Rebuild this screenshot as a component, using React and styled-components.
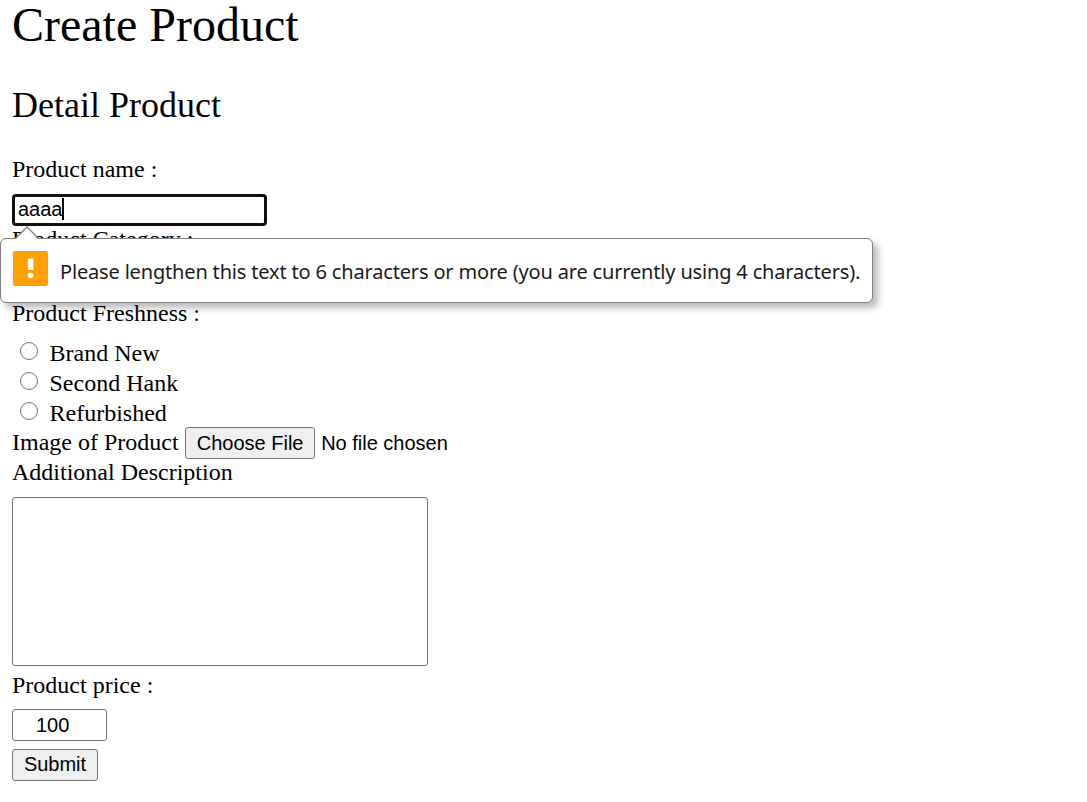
import React from "react";
import styled, { createGlobalStyle } from "styled-components";

const GlobalStyle = createGlobalStyle`
  * { box-sizing: border-box; }
  body {
    margin: 0;
    background: #fff;
    color: #000;
    font-family: "Liberation Serif", "Times New Roman", serif;
    font-size: 24px;
    line-height: 24px;
  }
`;

const Page = styled.main`
  display: flex;
  flex-direction: column;
  align-items: flex-start;
  padding: 0 12px;
`;

const Title = styled.h1`
  margin: 0 0 37px;
  font-size: 48px;
  line-height: 50px;
  font-weight: 400;
`;

const Subtitle = styled.h2`
  margin: 0 0 34px;
  font-size: 36px;
  line-height: 36px;
  font-weight: 400;
`;

const Form = styled.form`
  display: flex;
  flex-direction: column;
  align-items: flex-start;
`;

const Label = styled.label`
  display: block;
  height: 24px;
  margin-bottom: ${(p) => p.$gap || 0}px;
  white-space: nowrap;
`;

const Anchor = styled.div`
  position: relative;
  height: 33px;
`;

const NameField = styled.div`
  display: flex;
  align-items: center;
  width: 255px;
  height: 32px;
  padding: 0 3px 2px;
  border: 3px solid #101010;
  border-radius: 4px;
  background: #fff;
  font: 20px/24px "Liberation Sans", Arial, sans-serif;
`;

const Caret = styled.span`
  width: 2px;
  height: 22px;
  margin-left: -1px;
  background: #000;
`;

const Bubble = styled.div`
  position: absolute;
  z-index: 2;
  top: 44px;
  left: -12px;
  display: flex;
  align-items: center;
  gap: 12px;
  width: 873px;
  height: 65px;
  padding: 0 0 4px 12px;
  border: 1px solid #808084;
  border-radius: 6px;
  background: #fff;
  box-shadow: 5px 5px 7px rgba(0, 0, 0, 0.27);
  color: #1b1b1b;
  font: 20px/28px "Noto Sans", "Segoe UI", sans-serif;
  white-space: nowrap;
`;

const Pointer = styled.svg`
  position: absolute;
  top: -13px;
  left: 14px;
`;

const WarningIcon = styled.svg`
  flex: none;
`;

const Message = styled.span`
  padding-top: 7px;
  letter-spacing: -0.17px;
`;

const Category = styled.div`
  height: 74px;
`;

const Option = styled.label`
  display: flex;
  align-items: flex-start;
  gap: 11.5px;
  height: 30px;
  padding-left: 8px;
`;

const Radio = styled.input`
  appearance: none;
  width: 18px;
  height: 18px;
  margin: 1px 0 0;
  border: 1.5px solid #767676;
  border-radius: 50%;
  background: #fff;
`;

const FileRow = styled.div`
  display: flex;
  align-items: center;
  height: 32px;
  margin: -4px 0 1px;
`;

const FileLabel = styled(Label)`
  height: 26px;
`;

const Button = styled.button`
  width: ${(p) => p.$width}px;
  height: 32px;
  padding: 0 0 2px;
  border: 1px solid #767676;
  border-radius: 3px;
  background: #efefef;
  color: #000;
  font: 20px/24px "Liberation Sans", Arial, sans-serif;
  white-space: nowrap;
`;

const FileButton = styled(Button)`
  margin: 0 6.5px 0 6px;
  padding: 0 0 0 1px;
`;

const FileStatus = styled.span`
  font: 20px/24px "Liberation Sans", Arial, sans-serif;
`;

const Description = styled.textarea`
  display: block;
  width: 416px;
  height: 169px;
  margin: 0 0 7px;
  border: 1px solid #767676;
  border-radius: 3px;
  background: #fff;
  resize: none;
`;

const PriceInput = styled.input`
  width: 95px;
  height: 32px;
  margin: 0 0 8px;
  padding: 0 0 0 23px;
  border: 1px solid #767676;
  border-radius: 3px;
  background: #fff;
  color: #000;
  font: 20px/24px "Liberation Sans", Arial, sans-serif;
`;

const conditions = ["Brand New", "Second Hank", "Refurbished"];

export default function App() {
  return (
    <>
      <GlobalStyle />
      <Page>
        <Title>Create Product</Title>
        <Subtitle>Detail Product</Subtitle>
        <Form onSubmit={(e) => e.preventDefault()}>
          <Label $gap={13}>Product name :</Label>
          <Anchor>
            <NameField role="textbox">
              aaaa
              <Caret />
            </NameField>
            <Bubble role="alert">
              <Pointer width="24" height="14" viewBox="0 0 24 14">
                <path d="M1 13L12 1.5L23 13V14H1Z" fill="#fff" />
                <path d="M0.5 12.5L12 1L23.5 12.5" fill="none" stroke="#808084" strokeWidth="1.3" />
              </Pointer>
              <WarningIcon width="35" height="35" viewBox="0 0 35 35">
                <rect width="35" height="35" rx="2" fill="#ffa000" />
                <rect x="14.8" y="7.5" width="5.6" height="11.5" rx="0.5" fill="#fff" />
                <circle cx="17.6" cy="24.5" r="2.8" fill="#fff" />
              </WarningIcon>
              <Message>
                Please lengthen this text to 6 characters or more (you are currently using 4 characters).
              </Message>
            </Bubble>
          </Anchor>
          <Category>
            <Label>Product Category :</Label>
          </Category>
          <Label $gap={16}>Product Freshness :</Label>
          {conditions.map((name) => (
            <Option key={name}>
              <Radio type="radio" name="condition" />
              {name}
            </Option>
          ))}
          <FileRow>
            <FileLabel as="span">Image of Product</FileLabel>
            <FileButton type="button" $width={130}>Choose File</FileButton>
            <FileStatus>No file chosen</FileStatus>
          </FileRow>
          <Label $gap={13}>Additional Description</Label>
          <Description />
          <Label $gap={12}>Product price :</Label>
          <PriceInput type="text" defaultValue="100" />
          <Button type="submit" $width={86}>Submit</Button>
        </Form>
      </Page>
    </>
  );
}
